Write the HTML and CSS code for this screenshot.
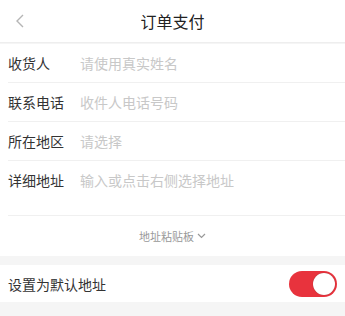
FILE: index.html
```html
<!DOCTYPE html>
<html lang="zh">

<head>
    <meta charset="utf-8">
    <meta name="viewport" content="width=device-width, initial-scale=1.0">
    <title>订单支付</title>
    <link rel="stylesheet" href="styles.css">
</head>

<body>

    <div class="top">
        <svg class="tilbage" width="12" height="16" viewBox="0 0 12 16">
            <path d="M9 2 L3 8 L9 14" fill="none" stroke="#b5b5b5" stroke-width="1.4"/>
        </svg>
        <h1>订单支付</h1>
    </div>

    <div class="form">
        <div class="felt">
            <span class="navn">收货人</span>
            <span class="hint">请使用真实姓名</span>
        </div>
        <div class="felt">
            <span class="navn">联系电话</span>
            <span class="hint">收件人电话号码</span>
        </div>
        <div class="felt">
            <span class="navn">所在地区</span>
            <span class="hint">请选择</span>
        </div>
        <div class="felt lang">
            <span class="navn">详细地址</span>
            <span class="hint">输入或点击右侧选择地址</span>
        </div>
        <div class="clip">
            地址粘贴板
            <svg width="9" height="6" viewBox="0 0 9 6">
                <path d="M1 1 L4.5 4.5 L8 1" fill="none" stroke="#999" stroke-width="1.2"/>
            </svg>
        </div>
    </div>

    <div class="standard">
        <span>设置为默认地址</span>
        <div class="toggle"><div class="knap"></div></div>
    </div>

</body>

</html>
```

FILE: styles.css
```css
body {
    margin: 0;
    background-color: #f5f5f5;
    font-family: "Noto Sans CJK SC", "Noto Sans", sans-serif;
    color: #333;
}

.top {
    height: 42px;
    background-color: white;
    border-bottom: 1px solid #eee;
    display: flex;
    align-items: center;
    justify-content: center;
    position: relative;
}

.top h1 {
    margin: 0;
    font-size: 16px;
    font-weight: normal;
    color: #222;
}

.tilbage {
    position: absolute;
    left: 14px;
    top: 13px;
}

.form {
    background-color: white;
    padding-left: 8px;
    margin-top: 1px;
}

.felt {
    height: 38px;
    display: flex;
    align-items: center;
    border-bottom: 1px solid #f0f0f0;
    font-size: 14px;
}

.felt.lang {
    height: 55px;
    align-items: flex-start;
    padding-top: 9px;
    box-sizing: border-box;
}

.navn {
    width: 72px;
    color: #333;
}

.hint {
    color: #c8c8c8;
}

.clip {
    height: 40px;
    display: flex;
    align-items: center;
    justify-content: center;
    gap: 3px;
    font-size: 11px;
    color: #999;
    padding-right: 8px;
}

.standard {
    margin-top: 9px;
    background-color: white;
    height: 37px;
    padding: 0 8px;
    display: flex;
    align-items: center;
    justify-content: space-between;
    font-size: 14px;
}

.toggle {
    width: 48px;
    height: 26px;
    border-radius: 13px;
    background-color: #e8333d;
    display: flex;
    align-items: center;
    justify-content: flex-end;
    padding-right: 2px;
    box-sizing: border-box;
}

.knap {
    width: 22px;
    height: 22px;
    border-radius: 50%;
    background-color: white;
    box-shadow: 0 0 1px rgba(0, 0, 0, 0.4);
}
```
